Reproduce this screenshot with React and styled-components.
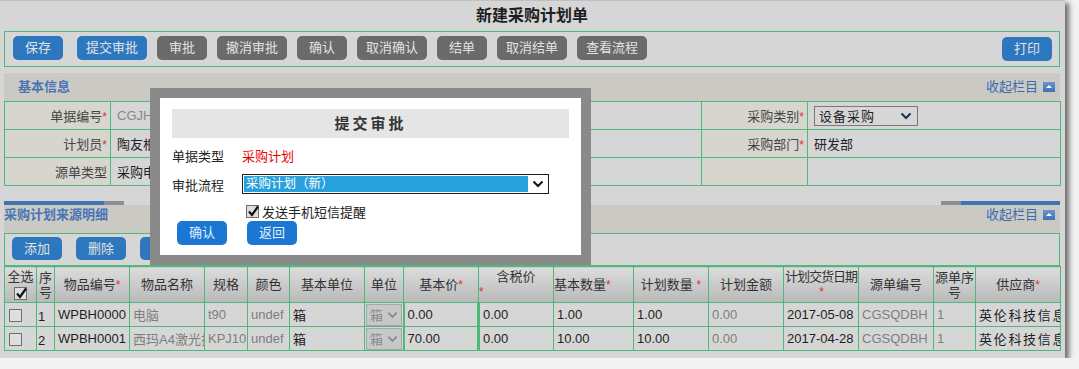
import React from 'react';
import styled, { createGlobalStyle } from 'styled-components';

const GREEN = '#4dba7b';
const FONT = `"Liberation Sans", "Noto Sans CJK SC", sans-serif`;

const Global = createGlobalStyle`
  html, body { margin: 0; padding: 0; background: #f2f2f2; }
  body { font-family: ${FONT}; font-size: 13px; color: #222; }
  * { box-sizing: border-box; }
  table { border-collapse: collapse; table-layout: fixed; }
`;

const Window = styled.div`
  position: relative;
  width: 1065px;
  height: 358px;
  background: #d6d6d6;
  border-top: 1px solid #c0c0c0;
  box-shadow: 4px 3px 5px rgba(0, 0, 0, 0.55);
  padding: 0 5px 0 4px;
`;

const Title = styled.div`
  height: 30px;
  line-height: 30px;
  text-align: center;
  font-size: 16px;
  font-weight: bold;
  color: #1e1e1e;
`;

const Toolbar = styled.div`
  display: flex;
  align-items: flex-start;
  height: ${p => p.$h}px;
  border: 1px solid ${GREEN};
  padding: ${p => p.$pt}px 7px 0 ${p => p.$pl}px;
`;

const Btn = styled.div`
  width: ${p => p.$w}px;
  height: ${p => p.$h || 24}px;
  line-height: ${p => p.$h || 24}px;
  margin-right: ${p => p.$mr ?? 10}px;
  margin-left: ${p => (p.$right ? 'auto' : '0')};
  margin-top: ${p => p.$mt || 0}px;
  border-radius: 5px;
  background: ${p => (p.$gray ? '#6a6a6a' : p.$bright ? '#1a78d4' : '#2c77bd')};
  color: ${p => (p.$bright ? '#e4eef8' : '#e2e2e2')};
  font-size: 13px;
  text-align: center;
  flex: none;
`;

const SectionHead = styled.div`
  display: flex;
  justify-content: space-between;
  align-items: ${p => (p.$top ? 'flex-start' : 'center')};
  height: 28px;
  margin-top: ${p => p.$mt || 0}px;
  background: #cbc9c4;
  padding: ${p => (p.$top ? '2px' : '0')} 5px 0 ${p => p.$pl}px;
  line-height: 16px;
`;

const SectionTitle = styled.div`
  font-weight: bold;
  font-size: 13px;
  color: #4874b4;
`;

const Collapse = styled.div`
  display: flex;
  align-items: center;
  color: #3b6cb0;
  font-size: 13px;
  gap: 5px;
`;

const CollapseIcon = styled.span`
  display: inline-block;
  width: 12px;
  height: 10px;
  background: linear-gradient(#6d93cc, #3f6fb6);
  position: relative;
  &::after {
    content: '';
    position: absolute;
    left: 3px;
    top: 3px;
    border-left: 3px solid transparent;
    border-right: 3px solid transparent;
    border-bottom: 3px solid #fff;
  }
`;

const FormTable = styled.table`
  width: 1056px;
`;

const FCell = styled.td`
  height: 28px;
  border: 1px solid ${GREEN};
  padding: ${p => (p.$label ? '0 3px 0 0' : '0 6px')};
  text-align: ${p => (p.$label ? 'right' : 'left')};
  background: ${p => (p.$label ? '#d6d5ce' : '#d6d6d6')};
  color: ${p => (p.$label ? '#444' : p.$muted ? '#888' : '#222')};
  white-space: nowrap;
  overflow: hidden;
`;

const Star = styled.span`
  color: #e03030;
  font-size: 12px;
  margin-left: ${p => p.$gap || 0}px;
`;

const SelectBox = styled.div`
  display: flex;
  align-items: center;
  justify-content: space-between;
  width: 104px;
  height: 20px;
  border: 1px solid #7a7a7a;
  padding: 0 5px 0 4px;
  letter-spacing: 1px;
  color: #222;
`;

const Chevron = ({ color = '#222', w = 12 }) => (
  <svg width={w} height={8} viewBox="0 0 12 8">
    <polyline points="1.5,1.5 6,6 10.5,1.5" fill="none" stroke={color} strokeWidth="2" />
  </svg>
);

const BarRow = styled.div`
  display: flex;
  justify-content: space-between;
  height: 4px;
  margin-top: 15px;
`;

const BarGroup = styled.div`
  display: flex;
`;

const BarSeg = styled.div`
  width: ${p => p.$w}px;
  background: ${p => (p.$blue ? '#3e74b4' : '#8a8e99')};
`;

const Detail = styled.table`
  width: 1056px;
`;

const Th = styled.th`
  height: 36px;
  border: 1px solid ${GREEN};
  background: linear-gradient(#dcdcdc, #b9b9b9);
  font-weight: normal;
  color: #333;
  font-size: 13px;
  line-height: 15px;
  padding: 0;
  white-space: nowrap;
  letter-spacing: ${p => p.$ls || 0}px;
  text-align: ${p => p.$align || 'center'};
  vertical-align: ${p => p.$valign || 'middle'};
  overflow: hidden;
`;

const Td = styled.td`
  height: 24px;
  border: 1px solid ${GREEN};
  border-left-width: ${p => p.$bl || 1}px;
  padding: ${p => (p.$pad !== undefined ? p.$pad : '0 3px')};
  color: ${p => (p.$muted ? '#7e7e7e' : '#1e1e1e')};
  letter-spacing: ${p => p.$ls || 0}px;
  white-space: nowrap;
  overflow: hidden;
  background: #d6d6d6;
`;

const Check = styled.span`
  display: inline-block;
  width: 13px;
  height: 13px;
  border: 1px solid #6e6e6e;
  background: #dedede;
  position: relative;
  vertical-align: middle;
  & svg { position: absolute; left: 0; top: -1px; }
`;

const CheckMark = () => (
  <svg width="13" height="13" viewBox="0 0 13 13">
    <polyline points="2,6.5 5,10 11,1.5" fill="none" stroke="#111" strokeWidth="2.2" />
  </svg>
);

const UnitSel = styled.div`
  display: flex;
  align-items: center;
  justify-content: space-between;
  height: 22px;
  background: #c8c8c8;
  border: 1px solid #a6a6a6;
  padding: 0 3px;
  color: #8a8a8a;
`;

const Dialog = styled.div`
  position: absolute;
  left: 150px;
  top: 87px;
  width: 441px;
  height: 177px;
  border: 10px solid #8a8a8a;
  background: #fff;
  padding: 11px 12px 0 12px;
  color: #222;
`;

const DTitle = styled.div`
  height: 29px;
  line-height: 29px;
  background: #e5e5e5;
  text-align: center;
  font-size: 15px;
  font-weight: bold;
  letter-spacing: 3px;
  color: #333;
`;

const DRow = styled.div`
  display: flex;
  align-items: center;
  height: ${p => p.$h}px;
  margin-top: ${p => p.$mt}px;
`;

const DLabel = styled.div`
  width: 70px;
  flex: none;
`;

const RedText = styled.div`
  color: #e80000;
`;

const DSelect = styled.div`
  display: flex;
  align-items: center;
  width: 307px;
  height: 20px;
  border: 1px solid #1e1e1e;
  padding: 1px;
`;

const DSelected = styled.div`
  flex: 1;
  height: 16px;
  line-height: 16px;
  background: #28a0dc;
  color: #fff;
  font-size: 12.5px;
  padding-left: 2px;
`;

const DChevron = styled.div`
  width: 19px;
  display: flex;
  justify-content: center;
`;

const CheckLabel = styled.div`
  display: flex;
  align-items: center;
  gap: 3px;
  margin-left: 74px;
`;

const DButtons = styled.div`
  display: flex;
  gap: 20px;
  margin-top: 0;
  padding-left: 5px;
`;

const formRows = [
  [['单据编号', true], ['CGJH2017042800001', false, true], ['计划日期', true], [''], ['采购类别', true], ['select']],
  [['计划员', true], ['陶友根'], ['计划部门', true], [''], ['采购部门', true], ['研发部']],
  [['源单类型'], ['采购申请'], ['备注'], [''], [''], ['']],
];

const cols = [32, 18, 75, 75, 43, 42, 75, 39, 75, 75, 80, 75, 75, 75, 75, 42, 85];

const rows = [
  ['1', 'WPBH0000', '电脑', 't90', '0.00', '1.00', '2017-05-08'],
  ['2', 'WPBH0001', '西玛A4激光打印纸', 'KPJ10', '70.00', '10.00', '2017-04-28'],
];

export default function App() {
  return (
    <>
      <Global />
      <Window>
        <Title>新建采购计划单</Title>
        <Toolbar $h={36} $pt={4} $pl={8}>
          <Btn $w={50} $mr={14}>保存</Btn>
          <Btn $w={70}>提交审批</Btn>
          <Btn $w={50} $gray>审批</Btn>
          <Btn $w={70} $gray>撤消审批</Btn>
          <Btn $w={50} $gray>确认</Btn>
          <Btn $w={70} $gray>取消确认</Btn>
          <Btn $w={50} $gray>结单</Btn>
          <Btn $w={70} $gray>取消结单</Btn>
          <Btn $w={70} $gray>查看流程</Btn>
          <Btn $w={50} $right $mr={0} $mt={1}>打印</Btn>
        </Toolbar>

        <SectionHead $mt={6} $pl={14}>
          <SectionTitle>基本信息</SectionTitle>
          <Collapse>收起栏目<CollapseIcon /></Collapse>
        </SectionHead>

        <FormTable>
          <colgroup>
            {[106, 295, 106, 190, 106, 253].map((w, i) => <col key={i} style={{ width: w }} />)}
          </colgroup>
          <tbody>
            {formRows.map((r, ri) => (
              <tr key={ri}>
                {r.map((c, ci) => {
                  const label = ci % 2 === 0;
                  if (c[0] === 'select') {
                    return (
                      <FCell key={ci}>
                        <SelectBox>设备采购<Chevron color="#1c2f55" /></SelectBox>
                      </FCell>
                    );
                  }
                  return (
                    <FCell key={ci} $label={label} $muted={c[2]}>
                      {c[0]}
                      {label && c[1] ? <Star>*</Star> : null}
                    </FCell>
                  );
                })}
              </tr>
            ))}
          </tbody>
        </FormTable>

        <BarRow>
          <BarGroup><BarSeg $w={100} $blue /><BarSeg $w={20} /></BarGroup>
          <BarGroup><BarSeg $w={20} /><BarSeg $w={99} $blue /></BarGroup>
        </BarRow>

        <SectionHead $top $pl={0}>
          <SectionTitle>采购计划来源明细</SectionTitle>
          <Collapse>收起栏目<CollapseIcon /></Collapse>
        </SectionHead>

        <Toolbar $h={33} $pt={3} $pl={7}>
          <Btn $w={50} $h={23} $mr={14}>添加</Btn>
          <Btn $w={50} $h={23} $mr={14}>删除</Btn>
          <Btn $w={50} $h={23} $mr={14}>保存</Btn>
        </Toolbar>

        <Detail>
          <colgroup>
            {cols.map((w, i) => <col key={i} style={{ width: w }} />)}
          </colgroup>
          <thead>
            <tr>
              <Th>全选<br /><Check><CheckMark /></Check></Th>
              <Th>序<br />号</Th>
              <Th>物品编号<Star>*</Star></Th>
              <Th>物品名称</Th>
              <Th>规格</Th>
              <Th>颜色</Th>
              <Th>基本单位</Th>
              <Th>单位</Th>
              <Th>基本价<Star>*</Star></Th>
              <Th $align="left">
                <div style={{ textAlign: 'center' }}>含税价</div>
                <Star>*</Star>
              </Th>
              <Th $align="left">基本数量<Star>*</Star></Th>
              <Th>计划数量 <Star>*</Star></Th>
              <Th>计划金额</Th>
              <Th $ls={-1}>计划交货日期<br /><Star>*</Star></Th>
              <Th>源单编号</Th>
              <Th>源单序<br />号</Th>
              <Th>供应商<Star>*</Star></Th>
            </tr>
          </thead>
          <tbody>
            {rows.map((r, i) => (
              <tr key={i}>
                <Td $pad="0 0 0 4px"><Check /></Td>
                <Td $pad="4px 0 0 1px">{r[0]}</Td>
                <Td>{r[1]}</Td>
                <Td $muted>{r[2]}</Td>
                <Td $muted>{r[3]}</Td>
                <Td $muted>undef</Td>
                <Td>箱</Td>
                <Td $pad="0 1px">
                  <UnitSel>箱<Chevron color="#8a8a8a" w={11} /></UnitSel>
                </Td>
                <Td $bl={2}>{r[4]}</Td>
                <Td $bl={3}>0.00</Td>
                <Td>{r[5]}</Td>
                <Td>{r[5]}</Td>
                <Td $muted>0.00</Td>
                <Td>{r[6]}</Td>
                <Td $muted>CGSQDBH</Td>
                <Td $muted>1</Td>
                <Td $ls={1.7}>英伦科技信息</Td>
              </tr>
            ))}
          </tbody>
        </Detail>

        <Dialog>
          <DTitle>提交审批</DTitle>
          <DRow $h={24} $mt={5}>
            <DLabel>单据类型</DLabel>
            <RedText>采购计划</RedText>
          </DRow>
          <DRow $h={20} $mt={7}>
            <DLabel>审批流程</DLabel>
            <DSelect>
              <DSelected>采购计划（新）</DSelected>
              <DChevron><Chevron color="#111" /></DChevron>
            </DSelect>
          </DRow>
          <DRow $h={19} $mt={8}>
            <CheckLabel>
              <Check><CheckMark /></Check>
              发送手机短信提醒
            </CheckLabel>
          </DRow>
          <DButtons>
            <Btn $w={50} $mr={0} $bright>确认</Btn>
            <Btn $w={50} $mr={0} $bright>返回</Btn>
          </DButtons>
        </Dialog>
      </Window>
    </>
  );
}
